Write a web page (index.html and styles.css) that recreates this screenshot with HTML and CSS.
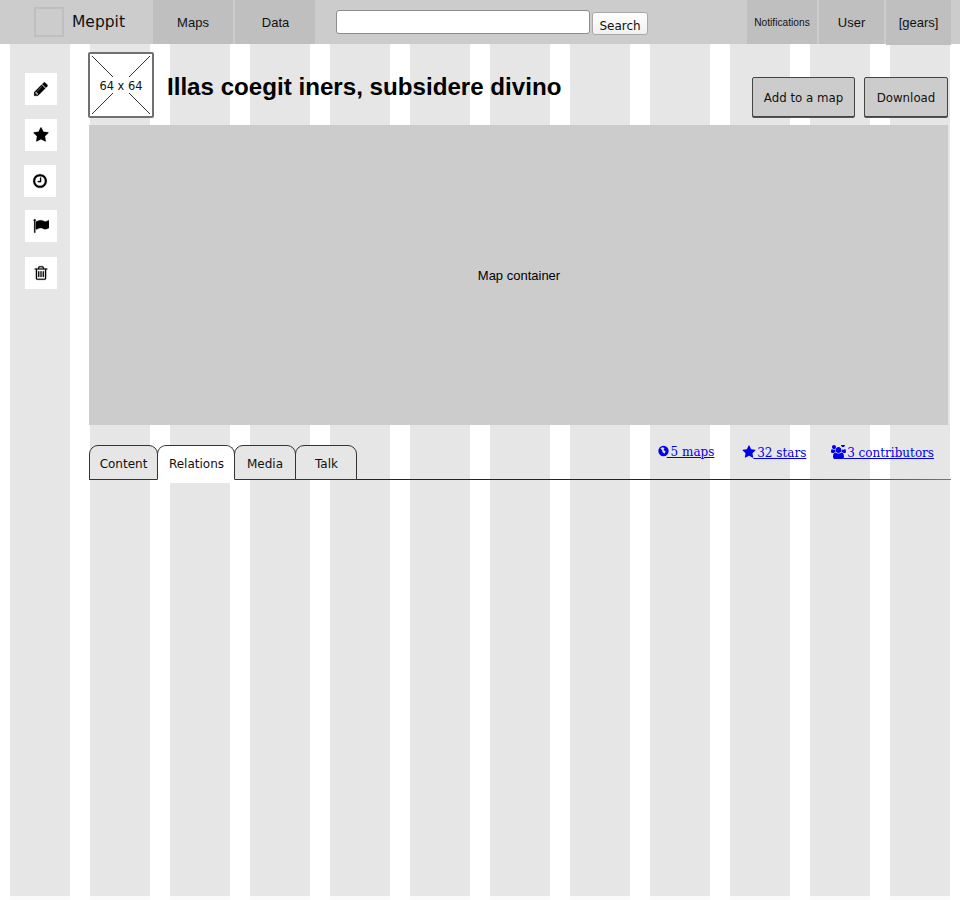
FILE: index.html
```html
<!DOCTYPE html>
<html lang="en">
<head>
<meta charset="utf-8">
<title>Meppit</title>
<link rel="stylesheet" href="styles.css">
</head>
<body>
<header class="topbar">
  <a class="brand"><span class="logo"></span><span class="brand-name">Meppit</span></a>
  <nav class="main-nav"><a class="nav-item nav-maps">Maps</a><a class="nav-item nav-data">Data</a></nav>
  <form class="search"><input class="search-input" type="text"><button class="search-btn" type="button">Search</button></form>
  <nav class="user-nav">
    <a class="nav-item nav-notif">Notifications</a>
    <a class="nav-item nav-user">User</a>
    <a class="nav-item nav-gears">[gears]</a>
  </nav>
</header>
<div class="page">
  <aside class="tools">
    <a class="tool"><svg viewBox="0 0 1792 1792" class="ico"><path d="M491 1536l91-91-235-235-91 91v107h128v128h107zm523-928q0-22-22-22-10 0-17 7l-542 542q-7 7-7 17 0 22 22 22 10 0 17-7l542-542q7-7 7-17zm-54-192l416 416-832 832h-416v-416zm683 96q0 53-37 90l-166 166-416-416 166-165q36-38 90-38 53 0 91 38l235 234q37 39 37 91z"/></svg></a>
    <a class="tool"><svg viewBox="0 0 1792 1792" class="ico"><path d="M1728 647q0 22-26 48l-363 354 86 500q1 7 1 20 0 21-10.500 35.500t-30.500 14.500q-19 0-40-12l-449-236-449 236q-22 12-40 12-21 0-31.500-14.500t-10.500-35.500q0-6 2-20l86-500-364-354q-25-27-25-48 0-37 56-46l502-73 225-455q19-41 49-41t49 41l225 455 502 73q56 9 56 46z"/></svg></a>
    <a class="tool tool-clock"><svg viewBox="0 0 1792 1792" class="ico"><path d="M1024 544v448q0 14-9 23t-23 9h-320q-14 0-23-9t-9-23v-64q0-14 9-23t23-9h224v-352q0-14 9-23t23-9h64q14 0 23 9t9 23zm416 352q0-148-73-273t-198-198-273-73-273 73-198 198-73 273 73 273 198 198 273 73 273-73 198-198 73-273zm224 0q0 209-103 385.500t-279.500 279.500-385.500 103-385.500-103-279.500-279.500-103-385.500 103-385.500 279.500-279.500 385.500-103 385.500 103 279.500 279.500 103 385.500z"/></svg></a>
    <a class="tool tool-flag"><svg viewBox="0 0 1792 1792" class="ico"><path d="M320 256q0 72-64 110v1266q0 13-9.500 22.500t-22.500 9.500h-64q-13 0-22.500-9.500t-9.500-22.500v-1266q-64-38-64-110 0-53 37.500-90.500t90.500-37.500 90.500 37.500 37.500 90.500zm1472 64v763q0 25-12.500 38.500t-39.500 27.500q-215 116-369 116-61 0-123.500-22t-108.500-48-115.500-48-142.500-22q-192 0-464 146-17 9-33 9-26 0-45-19t-19-45v-742q0-32 31-55 21-14 79-43 236-120 421-120 107 0 200 29t219 88q38 19 88 19 54 0 117.500-21t110-47 88-47 54.500-21q26 0 45 19t19 45z"/></svg></a>
    <a class="tool tool-trash"><svg viewBox="0 0 1792 1792" class="ico"><path d="M704 736v576q0 14-9 23t-23 9h-64q-14 0-23-9t-9-23v-576q0-14 9-23t23-9h64q14 0 23 9t9 23zm256 0v576q0 14-9 23t-23 9h-64q-14 0-23-9t-9-23v-576q0-14 9-23t23-9h64q14 0 23 9t9 23zm256 0v576q0 14-9 23t-23 9h-64q-14 0-23-9t-9-23v-576q0-14 9-23t23-9h64q14 0 23 9t9 23zm128 724v-948h-896v948q0 22 7 40.500t14.500 27 10.500 8.500h832q3 0 10.500-8.500t14.500-27 7-40.500zm-672-1076h448l-48-117q-7-9-17-11h-317q-10 2-17 11zm928 32v64q0 14-9 23t-23 9h-96v948q0 83-47 143.500t-113 60.500h-832q-66 0-113-58.500t-47-141.500v-952h-96q-14 0-23-9t-9-23v-64q0-14 9-23t23-9h309l70-167q15-37 54-63t79-26h320q40 0 79 26t54 63l70 167h309q14 0 23 9t9 23z"/></svg></a>
  </aside>
  <main class="content">
    <div class="title-row">
      <div class="placeholder">
        <svg class="placeholder-x" viewBox="0 0 62 62"><path d="M2 2L23 23M60 2L39 23M2 60L23 39M60 60L39 39"/></svg>
        <span class="placeholder-text">64 x 64</span>
      </div>
      <h1 class="title">Illas coegit iners, subsidere divino</h1>
      <div class="actions"><a class="btn">Add to a map</a><a class="btn">Download</a></div>
    </div>
    <div class="map">Map container</div>
    <div class="tabbar">
      <ul class="tabs">
        <li class="tab">Content</li>
        <li class="tab tab-active">Relations</li>
        <li class="tab">Media</li>
        <li class="tab">Talk</li>
      </ul>
      <div class="stats">
        <a class="stat" href="#"><svg viewBox="0 0 16 16" class="stat-ico"><path fill-rule="evenodd" d="M8 .5a7.500 7.500 0 1 1 0 15A7.500 7.500 0 0 1 8 .5zM3.500 4.500l2.500 2 .5 3 3 2.500 1.500-3.500-3-2 1.500-3-3.500-.8z"/></svg> 5 maps</a>
        <a class="stat" href="#"><svg viewBox="0 0 1792 1792" class="stat-ico stat-ico-star"><path d="M1728 647q0 22-26 48l-363 354 86 500q1 7 1 20 0 21-10.500 35.500t-30.500 14.500q-19 0-40-12l-449-236-449 236q-22 12-40 12-21 0-31.500-14.500t-10.500-35.500q0-6 2-20l86-500-364-354q-25-27-25-48 0-37 56-46l502-73 225-455q19-41 49-41t49 41l225 455 502 73q56 9 56 46z"/></svg> 32 stars</a>
        <a class="stat" href="#"><svg viewBox="0 0 1920 1792" class="stat-ico stat-ico-wide"><path d="M593 896q-162 5-265 128h-134q-82 0-138-40.500t-56-118.500q0-353 124-353 6 0 43.500 21t97.500 42.500 119 21.500q67 0 133-23-5 37-5 66 0 139 81 256zm1071 637q0 120-73 189.500t-194 69.500h-874q-121 0-194-69.500t-73-189.500q0-53 3.500-103.500t14-109 26.500-108.500 43-97.500 62-81 85.500-53.500 111.500-20q10 0 43 21.500t73 48 107 48 135 21.500 135-21.500 107-48 73-48 43-21.500q61 0 111.500 20t85.500 53.500 62 81 43 97.500 26.500 108.500 14 109 3.500 103.500zm-1024-1277q0 106-75 181t-181 75-181-75-75-181 75-181 181-75 181 75 75 181zm704 384q0 159-112.500 271.500t-271.500 112.500-271.500-112.500-112.500-271.500 112.500-271.500 271.500-112.500 271.500 112.500 112.500 271.500zm576 225q0 78-56 118.500t-138 40.500h-134q-103-123-265-128 81-117 81-256 0-29-5-66 66 23 133 23 59 0 119-21.500t97.500-42.500 43.500-21q124 0 124 353zm-128-865q0 106-75 181t-181 75-181-75-75-181 75-181 181-75 181 75 75 181z"/></svg> 3 contributors</a>
      </div>
    </div>
  </main>
</div>
</body>
</html>
```
FILE: styles.css
```css
* { box-sizing: border-box; }
html, body { height: 100%; }
body {
  margin: 0;
  height: 900px;
  overflow: hidden;
  font-family: "Liberation Sans", Arial, sans-serif;
  color: #000;
  background:
    linear-gradient(to bottom, transparent 896px, rgba(255,255,255,.8) 896px),
    repeating-linear-gradient(to right, #fff 0, #fff 10px, #e6e6e6 10px, #e6e6e6 70px, #fff 70px, #fff 80px);
}
.topbar {
  display: flex;
  height: 44px;
  background: #ccc;
  font-family: "DejaVu Sans", sans-serif;
}
.brand { display: flex; align-items: center; width: 153px; padding-left: 34px; }
.logo { width: 30px; height: 30px; border: 2px solid #bfbfbf; }
.brand-name { margin-left: 8px; font-size: 15.500px; color: #111; }
.main-nav { display: flex; gap: 2px; }
.nav-item {
  display: flex; align-items: center; justify-content: center;
  background: #bfbfbf; color: #111; font-family: "Liberation Sans", sans-serif; font-size: 13px;
  height: 44px;
}
.nav-maps { width: 80px; }
.nav-data { width: 80px; padding-left: 1px; }
.search { display: flex; margin-left: 21px; width: 316px; padding-top: 10px; }
.search-input {
  width: 254px; height: 24px; margin: 0; padding: 0 4px;
  background: #fff; border: 1px solid #8c8c8c; border-radius: 3px;
}
.search-btn {
  width: 56px; height: 23px; margin: 2px 0 0 2px; padding: 4px 0 0;
  background: linear-gradient(#fff, #f0f0f0);
  border: 1px solid #a9a9a9; border-radius: 3px;
  font-family: "DejaVu Sans", sans-serif; font-size: 12px; color: #111;
}
.user-nav { display: flex; gap: 2px; margin-left: auto; padding-right: 9px; }
.nav-notif { width: 70px; font-size: 10.200px; }
.nav-user { width: 65px; }
.nav-gears { width: 65px; height: 45px; }
.page { display: flex; padding: 8px 11px 0 25px; }
.tools { display: flex; flex-direction: column; width: 64px; padding-top: 21px; flex: none; }
.tool { display: flex; align-items: center; justify-content: center; width: 32px; height: 32px; background: #fff; margin-bottom: 14px; }
.tool-clock { margin-left: -1px; margin-bottom: 13px; }
.tool-flag { margin-bottom: 15px; }
.ico { width: 16px; height: 16px; fill: #000; stroke: #000; stroke-width: 25; }
.content { width: 859px; flex: none; }
.title-row { display: flex; align-items: flex-start; height: 67px; margin-bottom: 6px; }
.placeholder {
  position: relative; width: 66px; height: 66px; flex: none; margin-left: -1px; padding-top: 1px;
  display: flex; align-items: center; justify-content: center;
  background: #fff; border: 2px solid #707070; border-radius: 2px;
}
.placeholder-x { position: absolute; inset: 0; width: 100%; height: 100%; fill: none; stroke: #333; stroke-width: 1; }
.placeholder-text { position: relative; font-family: "DejaVu Sans Condensed", "DejaVu Sans", sans-serif; font-size: 12.700px; color: #111; }
.title { margin: 20px 0 0 13px; font-size: 24.150px; line-height: 30px; font-weight: 700; white-space: nowrap; }
.actions { display: flex; gap: 9px; margin-left: auto; margin-top: 25px; }
.btn {
  display: flex; align-items: center; justify-content: center;
  height: 40px; padding-top: 2px; background: #ccc; border: 1px solid #444; border-radius: 2px;
  font-family: "DejaVu Sans", sans-serif; font-size: 11.800px; color: #111;
  box-shadow: 0 1px 0 #555;
}
.btn:first-child { width: 103px; }
.btn:last-child { width: 84px; }
.map {
  display: flex; align-items: center; justify-content: center;
  height: 300px; padding-left: 1px; background: #ccc; font-size: 13px;
}
.tabbar { position: relative; height: 58px; padding-top: 20px; }
.tabs {
  display: flex; margin: 0; padding: 0; list-style: none; width: 862px; height: 35px;
  border-bottom: 1px solid #222;
  border-image: linear-gradient(to right, #222 80%, #777) 1;
}
.tab {
  display: flex; align-items: center; justify-content: center;
  height: 35px; padding-top: 2px; margin-right: -1px;
  background: #e6e6e6; border: 1px solid #333; border-radius: 9px 9px 0 0;
  font-family: "DejaVu Sans", sans-serif; font-size: 12px; color: #111;
  width: 69px;
}
.tab:nth-child(2) { width: 78px; padding-left: 1px; }
.tab:nth-child(3) { width: 62px; }
.tab:nth-child(4) { width: 62px; padding-left: 1px; }
.tab-active { background: #fff; border-bottom-color: #fff; position: relative; z-index: 1; }
.tab-active::after {
  content: ""; position: absolute; left: 0; right: 0; top: 100%; height: 4px; background: #fff;
}
.stats { position: absolute; right: 14px; top: 20px; display: flex; font-family: "DejaVu Serif", serif; font-size: 12px; }
.stat { color: #00e; white-space: nowrap; }
.stat:nth-child(1) { margin-right: 28px; }
.stat:nth-child(2) { margin-right: 25px; }
.stat-ico { width: 11px; height: 12px; fill: #00e; vertical-align: -1px; margin-right: -2px; }
.stat-ico-star { width: 14px; height: 14px; vertical-align: -2px; margin-right: -3px; }
.stat-ico-wide { width: 15px; height: 14px; vertical-align: -2px; margin-right: -3px; }
```
